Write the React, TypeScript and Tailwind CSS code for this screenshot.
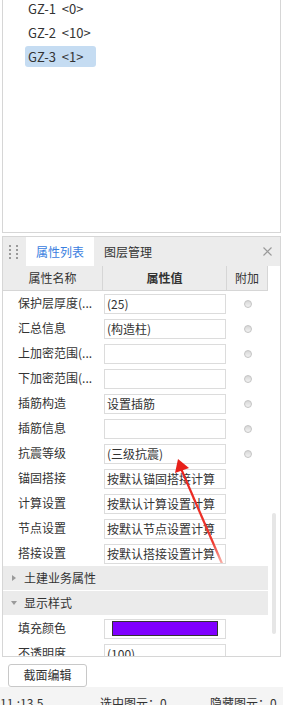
import React from 'react';

const FONT = { fontFamily: '"Microsoft YaHei", "Noto Sans CJK SC", "Noto Sans", sans-serif' };

const rows = [
  { label: '保护层厚度(...', value: '(25)', radio: true },
  { label: '汇总信息', value: '(构造柱)', radio: true },
  { label: '上加密范围(...', value: '', radio: true },
  { label: '下加密范围(...', value: '', radio: true },
  { label: '插筋构造', value: '设置插筋', radio: true },
  { label: '插筋信息', value: '', radio: true },
  { label: '抗震等级', value: '(三级抗震)', radio: true },
  { label: '锚固搭接', value: '按默认锚固搭接计算', radio: false },
  { label: '计算设置', value: '按默认计算设置计算', radio: false },
  { label: '节点设置', value: '按默认节点设置计算', radio: false },
  { label: '搭接设置', value: '按默认搭接设置计算', radio: false },
];

function Radio() {
  return (
    <span className="block w-[8px] h-[8px] rounded-full border border-[#c4c4c4] bg-gradient-to-b from-[#d8d8d8] to-[#f2f2f2]" />
  );
}

function Row({ label, children, radio }: { label: string; children?: React.ReactNode; radio?: boolean }) {
  return (
    <div className="flex h-[25px] shrink-0 bg-white">
      <div className="w-[100px] pl-[15px] pt-[4px] text-[12px] leading-[16px] text-[#333] whitespace-nowrap overflow-hidden">
        {label}
      </div>
      <div className="w-[124px] pt-[3px] pl-[1px]">
        <div className="w-[122px] h-[20px] border border-[#dcdcdc] px-[2px] text-[12px] leading-[18px] text-[#333] whitespace-nowrap overflow-hidden">
          {children}
        </div>
      </div>
      <div className="w-[41px] flex justify-center pt-[9px]">{radio && <Radio />}</div>
    </div>
  );
}

function Section({ title, open }: { title: string; open?: boolean }) {
  return (
    <div className="flex items-center h-[24px] mb-[1px] shrink-0 bg-[#ebebeb] text-[12px] text-[#333]">
      <span className="w-[21px] flex justify-center">
        {open ? (
          <svg width="6" height="4" viewBox="0 0 6 4">
            <path d="M0 0 L6 0 L3 4 Z" fill="#9a9a9a" />
          </svg>
        ) : (
          <svg width="4" height="6" viewBox="0 0 4 6">
            <path d="M0 0 L4 3 L0 6 Z" fill="#9a9a9a" />
          </svg>
        )}
      </span>
      <span>{title}</span>
    </div>
  );
}

export default function App() {
  return (
    <div className="relative w-[283px] h-[705px] bg-white overflow-hidden" style={FONT}>
      {/* component list */}
      <div className="mx-[2px] h-[235px] border-x border-b border-[#d6d6d6] pl-[22px] pt-[-2px]">
        <div className="flex flex-col -mt-[2px]">
          {['GZ-1 <0>', 'GZ-2 <10>', 'GZ-3 <1>'].map((t, i) => (
            <div
              key={t}
              className={`w-[71px] h-[21px] mb-[3px] pl-[3px] rounded-[3px] text-[13px] leading-[21px] text-[#333] whitespace-pre ${
                i === 2 ? 'bg-[#c5dcf2]' : ''
              }`}
            >
              {t.replace(' ', '  ')}
            </div>
          ))}
        </div>
      </div>

      {/* property panel */}
      <div className="mx-[2px] mt-[3px] h-[421px] border border-[#d6d6d6] flex flex-col overflow-hidden">
        <div className="h-[29px] shrink-0 bg-[#ececec] flex items-stretch text-[12px]">
          <div className="w-[23px] grid grid-cols-2 gap-x-[2px] gap-y-[2px] content-center pl-[6px] pr-[5px]">
            {Array.from({ length: 8 }).map((_, i) => (
              <span key={i} className="w-[2px] h-[2px] bg-[#9a9a9a]" />
            ))}
          </div>
          <div className="w-[68px] bg-white flex items-center justify-center text-[#3a80e0]">属性列表</div>
          <div className="w-[68px] flex items-center justify-center text-[#333]">图层管理</div>
          <div className="flex-1" />
          <div className="w-[25px] flex items-center justify-center">
            <svg width="9" height="9" viewBox="0 0 9 9">
              <path d="M0.5 0.5 L8.5 8.5 M8.5 0.5 L0.5 8.5" stroke="#9a9a9a" strokeWidth="1.1" />
            </svg>
          </div>
        </div>

        <div className="flex flex-1 min-h-0">
          <div className="w-[265px] flex flex-col">
            <div className="flex h-[25px] shrink-0 bg-[#ececec] border-b border-[#d6d6d6] text-[12px] text-[#333]">
              <div className="w-[100px] flex items-center justify-center border-r border-[#d6d6d6]">属性名称</div>
              <div className="w-[124px] flex items-center justify-center border-r border-[#d6d6d6] font-bold">属性值</div>
              <div className="w-[41px] flex items-center justify-center border-r border-[#d6d6d6]">附加</div>
            </div>
            {rows.map((r) => (
              <Row key={r.label} label={r.label} radio={r.radio}>
                {r.value}
              </Row>
            ))}
            <Section title="土建业务属性" />
            <Section title="显示样式" open />
            <Row label="填充颜色">
              <div className="mx-[5px] mt-[1px] h-[15px] border border-[#333] bg-[#8000ff]" />
            </Row>
            <Row label="不透明度">(100)</Row>
          </div>
          <div className="flex-1 flex justify-center">
            <div className="w-[4px] h-[121px] mt-[247px] rounded-full bg-[#e6e6e6]" />
          </div>
        </div>
      </div>

      {/* button */}
      <div className="h-[30px] pl-[8px] pt-[4px]">
        <button className="w-[79px] h-[23px] border border-[#c8c8c8] rounded-[3px] bg-white text-[12px] text-[#333]">
          截面编辑
        </button>
      </div>

      {/* status bar */}
      <div className="h-[20px] bg-[#f4f4f4] flex text-[12px] text-[#333] pt-[8px] leading-[16px] whitespace-nowrap">
        <span className="w-[100px]">11.:13.5</span>
        <span className="w-[110px]">选中图元：0</span>
        <span>隐藏图元：0</span>
      </div>

      {/* annotation arrow */}
      <svg className="absolute left-0 top-0 pointer-events-none" width="283" height="705" viewBox="0 0 283 705">
        <defs>
          <linearGradient id="ar" x1="178" y1="460" x2="222" y2="563" gradientUnits="userSpaceOnUse">
            <stop offset="0" stopColor="#e8201a" />
            <stop offset="0.8" stopColor="#ee3a30" />
            <stop offset="1" stopColor="#f8b0a8" />
          </linearGradient>
        </defs>
        <path d="M181.5 467 L223 563 L220.5 563 L179.5 468 Z" fill="url(#ar)" />
        <path d="M178 459 L189 468 L175 473 Z" fill="#e8201a" />
      </svg>
    </div>
  );
}
